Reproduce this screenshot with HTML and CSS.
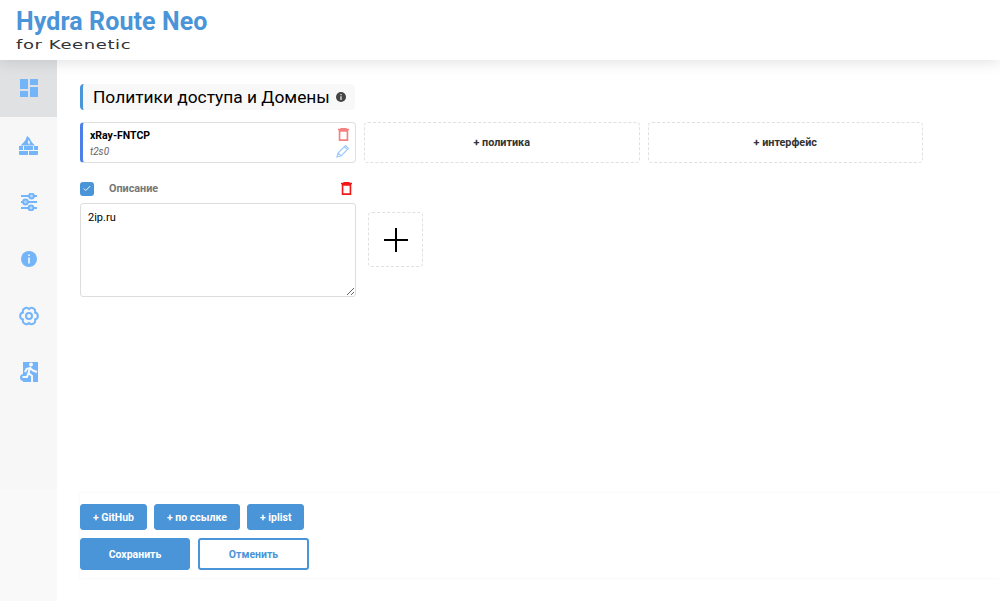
FILE: index.html
```html
<!DOCTYPE html>
<html lang="en">
<head>
    <meta charset="UTF-8">
    <meta name="viewport" content="width=device-width, initial-scale=1.0">
    <title>Hydra Route Neo</title>
    <link rel="stylesheet" href="styles.css">
</head>
<body>

    <header class="header">
        <div class="logo-title">Hydra Route Neo</div>
        <div class="logo-sub">for Keenetic</div>
    </header>

    <div class="layout">

        <!-- Sidebar -->
        <nav class="sidebar">
            <a class="nav-item active">
                <svg viewBox="0 0 18 18" width="18" height="18"><path d="M0 0h8v10H0zM10 0h8v6h-8zM0 12h8v6H0zM10 8h8v10h-8z"/></svg>
            </a>
            <a class="nav-item">
                <svg viewBox="0 0 19 19" width="19" height="19"><path d="M1.500 9.500 4.500 6.500 6.500 4 8 0c2 1 3.500 3 4 5l1.500 2 2.500 2.500zM0 10h4v4H0zM5 10h9v4H5zM15 10h4v4h-4zM0 15h9v4H1a1 1 0 0 1-1-1zM10 15h9v3a1 1 0 0 1-1 1h-8z"/><path class="cut" d="M9.500 3.500l1.500 3-1 2.500-1-2.500z"/></svg>
            </a>
            <a class="nav-item">
                <svg class="stroke" viewBox="0 0 18 18" width="18" height="18"><path d="M1 3h16M1 9h16M1 15h16"/><circle class="knob" cx="11.500" cy="3" r="2.400"/><circle class="knob" cx="5.500" cy="9" r="2.400"/><circle class="knob" cx="11" cy="15" r="2.400"/></svg>
            </a>
            <a class="nav-item">
                <svg viewBox="0 0 16 16" width="16" height="16"><circle cx="8" cy="8" r="8"/><path class="cut" d="M7.200 3.500h1.600v1.600H7.200zM7.200 6.500h1.600v6H7.200z"/></svg>
            </a>
            <a class="nav-item">
                <svg class="stroke" viewBox="0 0 20 20" width="20" height="20"><path d="M16.060 6.500A3.600 3.600 0 0 1 16.060 13.500 3.600 3.600 0 0 1 10 17 3.600 3.600 0 0 1 3.940 13.500 3.600 3.600 0 0 1 3.940 6.500 3.600 3.600 0 0 1 10 3 3.600 3.600 0 0 1 16.060 6.500z"/><circle cx="10" cy="10" r="3"/></svg>
            </a>
            <a class="nav-item">
                <svg viewBox="0 0 18 20" width="18" height="20"><path d="M3 0h15v20H3z"/><circle cx="3.500" cy="15.500" r="3.500"/><circle class="cut" cx="11" cy="2.500" r="2"/><path class="figure" d="M5 10l1.500-3 3.500-1-1.500 5 3.500 3v6M8.500 11 7 15H2.500M10 6l3 2.500 4 1.500"/></svg>
            </a>
        </nav>

        <main class="main">

            <div class="title-bar">
                <h1>Политики доступа и Домены</h1>
                <svg class="title-info" viewBox="0 0 10 10" width="10" height="10"><circle cx="5" cy="5" r="5"/><path class="cut" d="M4.400 2h1.200v1.200H4.400zM4.400 4.200h1.200V8H4.400z"/></svg>
            </div>

            <div class="policy-row">
                <div class="policy-card">
                    <div class="policy-text">
                        <div class="policy-name">xRay-FNTCP</div>
                        <div class="policy-iface">t2s0</div>
                    </div>
                    <div class="policy-actions">
                        <svg class="trash faded" viewBox="0 0 12 14" width="11" height="13"><path d="M0 1.500h12M3.500 1.500V.6h5v.9M1.700 3h8.600v10.200H1.700z"/></svg>
                        <svg class="pencil" viewBox="0 0 14 14" width="14" height="14"><path d="M1 13l1-4 7.500-7.500 3 3L5 12zM2 9l3 3M8.300 2.700l3 3"/></svg>
                    </div>
                </div>
                <div class="dashed-btn">+ политика</div>
                <div class="dashed-btn">+ интерфейс</div>
            </div>

            <div class="rule-row">
                <div class="rule">
                    <div class="rule-head">
                        <span class="check">
                            <svg viewBox="0 0 10 8" width="8" height="7"><path d="M1 4l2.500 2.500L9 1"/></svg>
                        </span>
                        <span class="rule-label">Описание</span>
                        <svg class="trash" viewBox="0 0 12 14" width="11" height="13"><path d="M0 1.500h12M3.500 1.500V.6h5v.9M1.700 3h8.600v10.200H1.700z"/></svg>
                    </div>
                    <textarea class="rule-input">2ip.ru</textarea>
                </div>
                <div class="add-box">
                    <svg viewBox="0 0 24 24" width="24" height="24"><path d="M12 0v24M0 12h24"/></svg>
                </div>
            </div>

            <div class="actions">
                <div class="btn-line small">
                    <button class="btn">+ GitHub</button>
                    <button class="btn">+ по ссылке</button>
                    <button class="btn">+ iplist</button>
                </div>
                <div class="btn-line">
                    <button class="btn wide">Сохранить</button>
                    <button class="btn wide outline">Отменить</button>
                </div>
            </div>

        </main>
    </div>

</body>
</html>
```

FILE: styles.css
```css
* {
    box-sizing: border-box;
}
html, body {
    height: 100%;
}
body {
    font-family: 'Roboto', sans-serif;
    margin: 0;
    background: white;
    color: black;
    display: flex;
    flex-direction: column;
    overflow: hidden;
}
.header {
    height: 60px;
    padding: 7px 16px 0;
    background: white;
    box-shadow: 0 2px 14px rgba(0, 0, 0, 0.12);
    position: relative;
    z-index: 1;
}
.logo-title {
    font-size: 25px;
    line-height: 30px;
    font-weight: 700;
    letter-spacing: 0.1px;
    color: #4a94d8;
}
.logo-sub {
    width: 76px;
    font-family: 'DejaVu Sans', sans-serif;
    font-size: 12px;
    line-height: 14px;
    margin-top: 1px;
    color: #333;
    letter-spacing: 0.4px;
    white-space: nowrap;
    transform: scaleX(1.5);
    transform-origin: left;
}
.layout {
    flex: 1;
    display: flex;
    min-height: 0;
}
.sidebar {
    width: 57px;
    margin-bottom: 12px;
    background: linear-gradient(#f7f7f7 429px, #f9f9f9 429px);
    flex-shrink: 0;
}
.nav-item {
    height: 56.800px;
    display: flex;
    align-items: center;
    justify-content: center;
}
.nav-item.active {
    background: #dfe1e3;
}
.nav-item svg {
    fill: #74b5fa;
}
.nav-item svg.stroke {
    fill: none;
    stroke: #74b5fa;
    stroke-width: 2;
}
.nav-item svg.stroke .knob {
    fill: #b9d9fb;
}
.nav-item svg .cut {
    fill: #f8f8f8;
}
.nav-item svg .figure {
    fill: none;
    stroke: #f8f8f8;
    stroke-width: 2;
}
.main {
    flex: 1;
    min-width: 0;
    padding: 24px 0 0 23px;
    display: flex;
    flex-direction: column;
}
.title-bar {
    width: 275px;
    height: 26px;
    display: flex;
    align-items: center;
    gap: 6px;
    padding-left: 10px;
    background: #f8f8f8;
    border-left: 3px solid #4a94d8;
    border-radius: 4px;
}
.title-bar h1 {
    font-size: 17.350px;
    font-weight: 400;
    margin: 0;
    white-space: nowrap;
}
.title-info {
    fill: #444;
}
.title-info .cut {
    fill: #f8f8f8;
}
.policy-row {
    margin-top: 12px;
    display: flex;
    gap: 8px;
}
.policy-card {
    width: 276px;
    height: 41px;
    padding: 0 5px 0 7px;
    flex-shrink: 0;
    display: flex;
    justify-content: space-between;
    border: 1px solid #e0e0e0;
    border-left: 3px solid #4d7fe6;
    border-radius: 4px;
}
.policy-name {
    margin-top: 6px;
    font-size: 10.500px;
    line-height: 14px;
    font-weight: 700;
}
.policy-iface {
    margin-top: 2px;
    font-size: 10px;
    line-height: 13px;
    font-style: italic;
    color: #666;
}
.policy-actions {
    display: flex;
    flex-direction: column;
    align-items: center;
    gap: 3px;
    padding-top: 5px;
}
.trash {
    fill: none;
    stroke: #f01818;
    stroke-width: 1.800;
    flex-shrink: 0;
}
.trash.faded {
    opacity: 0.55;
}
.pencil {
    fill: none;
    stroke: #9ccbfb;
    stroke-width: 1.200;
}
.dashed-btn {
    width: 275.500px;
    height: 41px;
    display: flex;
    align-items: center;
    justify-content: center;
    font-size: 10.800px;
    font-weight: 700;
    color: #333;
    border: 1px dashed #e0e0e0;
    border-radius: 4px;
}
.rule-row {
    margin-top: 18px;
    display: flex;
    align-items: flex-start;
    gap: 12px;
}
.rule {
    width: 276px;
}
.rule-head {
    height: 15px;
    display: flex;
    align-items: center;
}
.check {
    width: 14px;
    height: 14px;
    display: flex;
    align-items: center;
    justify-content: center;
    background: #4a94d8;
    border-radius: 3px;
}
.check svg {
    fill: none;
    stroke: white;
    stroke-width: 1.200;
}
.rule-label {
    margin-left: 15px;
    flex: 1;
    font-size: 10.800px;
    font-weight: 700;
    color: #777;
}
.rule-head .trash {
    margin-right: 4px;
}
.rule-input {
    display: block;
    width: 276px;
    height: 94px;
    margin: 7px 0 0;
    padding: 7px 7px;
    font-family: 'Roboto', sans-serif;
    font-size: 11px;
    color: black;
    border: 1px solid #ddd;
    border-radius: 3px;
    outline: none;
}
.add-box {
    width: 55px;
    height: 55px;
    margin-top: 31px;
    display: flex;
    align-items: center;
    justify-content: center;
    border: 1px dashed #e0e0e0;
    border-radius: 4px;
}
.add-box svg {
    stroke: black;
    stroke-width: 2;
}
.actions {
    margin-top: auto;
    margin-bottom: 35px;
    padding: 11px 0 8px;
    display: flex;
    flex-direction: column;
    gap: 8px;
    box-shadow: 0 0 3px rgba(0, 0, 0, 0.06);
}
.btn-line {
    display: flex;
    gap: 8px;
}
.btn-line.small {
    gap: 7px;
}
.btn {
    height: 26px;
    padding: 0 12px;
    font-family: 'Roboto', sans-serif;
    font-size: 10.500px;
    font-weight: 700;
    color: white;
    background: #4a94d8;
    border: 1px solid #4a94d8;
    border-radius: 3px;
}
.btn.wide {
    width: 110px;
    height: 32px;
}
.btn.outline {
    width: 111px;
    color: #4a94d8;
    background: white;
    border-width: 2px;
}
```
